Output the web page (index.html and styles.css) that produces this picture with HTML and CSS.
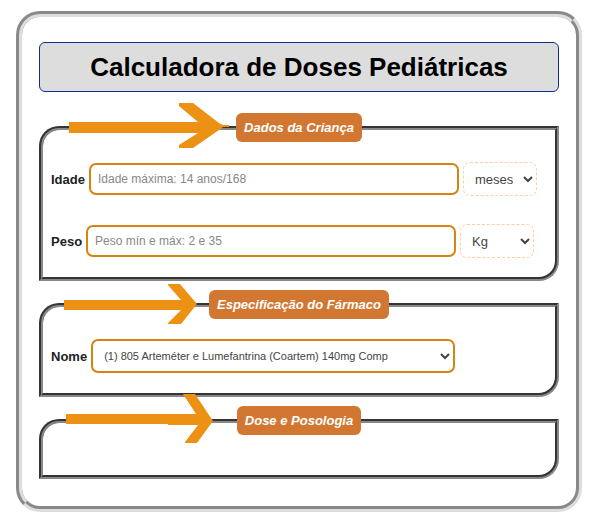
FILE: index.html
```html
<!DOCTYPE html>
<html lang="pt">
<head>
<meta charset="utf-8">
<title>Calculadora de Doses Pediátricas</title>
<link rel="stylesheet" href="styles.css">
</head>
<body>
<main class="panel">
  <h1 class="title">Calculadora de Doses Pediátricas</h1>
  <form class="form">
    <div class="group">
      <fieldset class="box box-tall">
        <legend class="legend">Dados da Criança</legend>
        <div class="row">
          <label for="idade">Idade</label>
          <input class="field" id="idade" type="text" placeholder="Idade máxima: 14 anos/168">
          <select class="unit" aria-label="Unidade da idade"><option>meses</option><option>anos</option></select>
        </div>
        <div class="row">
          <label for="peso">Peso</label>
          <input class="field" id="peso" type="text" placeholder="Peso mín e máx: 2 e 35">
          <select class="unit" aria-label="Unidade do peso"><option>Kg</option><option>g</option></select>
        </div>
      </fieldset>
      <svg class="arrow" width="190" height="60" viewBox="0 -20 190 60" aria-hidden="true"><path d="M30 9H159L140-7V-10H154L180 10L184 12H190V14H184L180 17L154 35H140V32L159 20H30Z"/></svg>
    </div>
    <div class="group">
      <fieldset class="box">
        <legend class="legend">Especificação do Fármaco</legend>
        <div class="row">
          <label for="nome">Nome</label>
          <select class="field drug" id="nome"><option>(1) 805 Arteméter e Lumefantrina (Coartem) 140mg Comp</option></select>
        </div>
      </fieldset>
      <svg class="arrow" width="190" height="60" viewBox="0 -20 190 60" aria-hidden="true"><path d="M25 10H142L129-5V-6H141L158 14L142 34H129V33L142 20H25Z"/></svg>
    </div>
    <div class="group">
      <fieldset class="box">
        <legend class="legend">Dose e Posologia</legend>
      </fieldset>
      <svg class="arrow" width="190" height="60" viewBox="0 -20 190 60" aria-hidden="true"><path d="M27 8H157L144-12H156L174 15L158 37H146V36L159 19H129V18H27Z"/></svg>
    </div>
  </form>
</main>
</body>
</html>
```
FILE: styles.css
```css
* {
  box-sizing: border-box;
}

body {
  margin: 11px 18px 12px 16px;
  background: #fff;
  color: #222;
  font: 13px "Liberation Sans", Arial, sans-serif;
}

.panel {
  padding: 25px 17px 27px;
  border: 6px groove #ddd;
  border-radius: 24px;
}

.title {
  margin: 0 0 21px;
  padding: 9px 0;
  border: 1px solid #0d2f8f;
  border-radius: 6px;
  background: #ddd;
  color: #000;
  font-size: 26px;
  line-height: 30px;
  text-align: center;
}

.form {
  display: flex;
  flex-direction: column;
  gap: 9px;
}

.group {
  position: relative;
}

.box {
  min-width: 0;
  margin: 0;
  padding: 20px 8px;
  border: 4px groove #888;
  border-radius: 20px 0;
}

.box-tall {
  padding-bottom: 19px;
}

.legend {
  margin: 0 auto;
  padding: 7px 8px;
  border-radius: 6px;
  background: #d17731;
  color: #fff;
  font-weight: bold;
  font-style: italic;
  line-height: 15px;
}

.row {
  display: flex;
  align-items: center;
  gap: 4px;
}

.row + .row {
  margin-top: 28px;
}

.row label {
  font-weight: bold;
}

.field {
  width: 370px;
  height: 32px;
  padding: 0 7px;
  border: 2px solid #d5850f;
  border-radius: 7px;
  background: #fff;
  color: #444;
  font: 12px "Liberation Sans", Arial, sans-serif;
}

.field::placeholder {
  color: #888;
}

.drug {
  width: 364px;
  height: 34px;
  font-size: 11px;
}

.unit {
  width: 74px;
  height: 34px;
  padding: 0 7px;
  border: 1px dashed #ffcfa3;
  border-radius: 7px;
  background: #fff;
  color: #444;
  font: 13px "Liberation Sans", Arial, sans-serif;
}

.arrow {
  position: absolute;
  top: -20px;
  left: 0;
  fill: #ec9114;
  pointer-events: none;
}
```
